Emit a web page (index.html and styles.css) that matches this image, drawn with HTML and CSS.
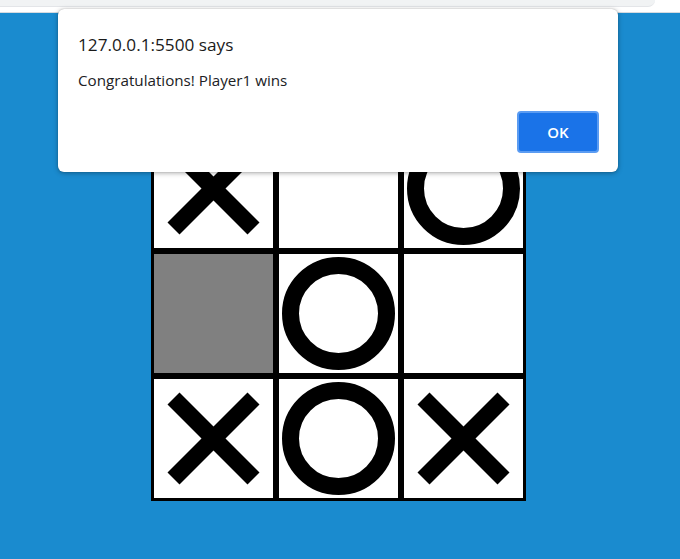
FILE: index.html
```html
<!DOCTYPE html>
<html lang="en">
<head>
<meta charset="utf-8">
<title>Tic Tac Toe</title>
<link rel="stylesheet" href="styles.css">
</head>
<body>
<div class="chrome">
  <div class="chrome-tab"></div>
</div>
<main class="page">
  <div class="board">
    <div class="cell"><svg class="mark" viewBox="0 0 119 119"><line x1="19.5" y1="19.5" x2="99.5" y2="99.5"/><line x1="99.5" y1="19.5" x2="19.5" y2="99.5"/></svg></div>
    <div class="cell"></div>
    <div class="cell"><svg class="mark" viewBox="0 0 119 119"><circle cx="59.5" cy="59.5" r="48"/></svg></div>
    <div class="cell cell-grey"></div>
    <div class="cell"><svg class="mark" viewBox="0 0 119 119"><circle cx="59.5" cy="59.5" r="48"/></svg></div>
    <div class="cell"></div>
    <div class="cell"><svg class="mark" viewBox="0 0 119 119"><line x1="19.5" y1="19.5" x2="99.5" y2="99.5"/><line x1="99.5" y1="19.5" x2="19.5" y2="99.5"/></svg></div>
    <div class="cell"><svg class="mark" viewBox="0 0 119 119"><circle cx="59.5" cy="59.5" r="48"/></svg></div>
    <div class="cell"><svg class="mark" viewBox="0 0 119 119"><line x1="19.5" y1="19.5" x2="99.5" y2="99.5"/><line x1="99.5" y1="19.5" x2="19.5" y2="99.5"/></svg></div>
  </div>
</main>
<div class="dialog" role="alertdialog">
  <div class="dialog-title">127.0.0.1:5500 says</div>
  <div class="dialog-message">Congratulations! Player1 wins</div>
  <div class="dialog-actions">
    <button class="dialog-ok">OK</button>
  </div>
</div>
</body>
</html>
```
FILE: styles.css
```css
html, body {
  margin: 0;
  padding: 0;
}
body {
  background: #1a8bcf;
  width: 680px;
  height: 559px;
  overflow: hidden;
  position: relative;
  font-family: "Open Sans", "Noto Sans", sans-serif;
}
.chrome {
  height: 13px;
  background: #ffffff;
  border-bottom: 1px solid #d6dbe0;
  box-sizing: border-box;
}
.chrome-tab {
  width: 655px;
  height: 7px;
  background: #f1f3f4;
  border-bottom: 1px solid #e3e5e8;
  border-bottom-right-radius: 9px;
  box-sizing: border-box;
}
.page {
  padding-top: 113px;
  padding-left: 151px;
}
.board {
  display: grid;
  grid-template-columns: repeat(3, 125px);
  grid-template-rows: repeat(3, 125px);
  width: 375px;
}
.cell {
  box-sizing: border-box;
  border: 3px solid #000;
  background: #fff;
  display: flex;
}
.cell-grey {
  background: #808080;
}
.mark {
  width: 119px;
  height: 119px;
  fill: none;
  stroke: #000;
  stroke-width: 17;
  stroke-linecap: butt;
}
.dialog {
  position: absolute;
  left: 58px;
  top: 9px;
  width: 560px;
  height: 163px;
  box-sizing: border-box;
  background: #fff;
  border-radius: 6px;
  box-shadow: 0 1px 5px rgba(0, 0, 0, 0.35), 0 0 1px rgba(0, 0, 0, 0.3);
  padding: 23px 19px 19px 20px;
  display: flex;
  flex-direction: column;
  color: #202124;
}
.dialog-title {
  font-size: 17.2px;
  line-height: 25px;
  color: #1a1a1a;
}
.dialog-message {
  font-size: 15.2px;
  line-height: 21px;
  margin-top: 13px;
  color: #202124;
}
.dialog-actions {
  margin-top: auto;
  display: flex;
  justify-content: flex-end;
}
.dialog-ok {
  width: 82px;
  height: 42px;
  box-sizing: border-box;
  background: #1a73e8;
  border: 2px solid #5b9cf2;
  border-radius: 4px;
  color: #fff;
  font-family: "Open Sans", "Noto Sans", sans-serif;
  font-weight: 600;
  font-size: 15px;
  padding: 0;
}
```
